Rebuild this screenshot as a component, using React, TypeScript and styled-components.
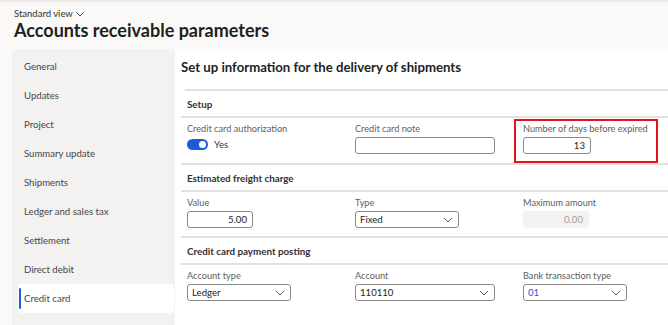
import React from 'react';
import styled, { createGlobalStyle } from 'styled-components';

const GlobalStyle = createGlobalStyle`
  html, body { margin: 0; padding: 0; background: #faf9f8; }
  body { font-family: Lato, "Open Sans", sans-serif; color: #201f1e; }
  * { box-sizing: border-box; }
`;

const Page = styled.div`
  width: 668px;
  height: 325px;
  overflow: hidden;
  display: flex;
  flex-direction: column;
  background: linear-gradient(#e6e4e2 0, #f3f2f1 2px, #faf9f8 4px);
`;

const Header = styled.header`
  height: 49px;
  padding: 8px 14px 0;
  display: flex;
  flex-direction: column;
`;

const ViewSwitcher = styled.div`
  display: flex;
  align-items: center;
  gap: 3px;
  font-size: 9.5px;
  line-height: 12px;
  color: #323130;
`;

const Title = styled.h1`
  margin: 0;
  font-size: 18px;
  font-weight: 700;
  line-height: 20px;
  color: #201f1e;
`;

const Panel = styled.div`
  flex: 1;
  margin-left: 12px;
  display: grid;
  grid-template-columns: 163px 1fr;
`;

const Nav = styled.nav`
  background: #f3f2f1;
  border-top-left-radius: 6px;
  padding: 3px 1px 0 6px;
  display: flex;
  flex-direction: column;
`;

const NavItem = styled.div<{ $active?: boolean }>`
  position: relative;
  height: 29px;
  display: flex;
  align-items: center;
  padding-left: 6px;
  font-size: 9.6px;
  color: #484644;
  border-radius: 4px;
  background: ${p => (p.$active ? '#ffffff' : 'transparent')};
  ${p =>
    p.$active &&
    `&::before {
      content: '';
      position: absolute;
      left: 1px;
      top: 4px;
      bottom: 4px;
      width: 2px;
      border-radius: 1px;
      background: #1d5bd8;
    }`}
`;

const Content = styled.main`
  background: #ffffff;
  padding-left: 6px;
  display: flex;
  flex-direction: column;
`;

const PageHeading = styled.h2`
  margin: 0;
  height: 40px;
  padding-top: 8px;
  font-size: 13.2px;
  line-height: 20px;
  font-weight: 700;
  color: #201f1e;
`;

const Divider = styled.div<{ $inset?: number }>`
  height: 2px;
  margin-left: ${p => p.$inset ?? 0}px;
  background: #e3e1df;
`;

const SectionTitle = styled.h3`
  margin: 0;
  height: 25px;
  padding-left: 6px;
  display: flex;
  align-items: center;
  font-size: 9.8px;
  font-weight: 700;
  color: #323130;
`;

const FieldRow = styled.div<{ $h: number }>`
  height: ${p => p.$h}px;
  padding: 4px 0 0 6px;
  display: grid;
  grid-template-columns: repeat(3, 168px);
`;

const Field = styled.div<{ $highlight?: boolean }>`
  position: relative;
  display: flex;
  flex-direction: column;
  ${p =>
    p.$highlight &&
    `&::after {
      content: '';
      position: absolute;
      left: -9px;
      top: -3px;
      width: 140px;
      height: 40px;
      border: 2px solid #e3121d;
    }`}
`;

const Label = styled.div`
  font-size: 9.2px;
  line-height: 14px;
  color: #605e5c;
  white-space: nowrap;
`;

const Control = styled.div<{ $w: number; $align?: 'left' | 'right'; $disabled?: boolean; $link?: boolean }>`
  width: ${p => p.$w}px;
  height: 17px;
  margin-top: 1px;
  display: flex;
  align-items: center;
  justify-content: ${p => (p.$align === 'right' ? 'flex-end' : 'space-between')};
  padding: 0 5px 0 4px;
  border: ${p => (p.$disabled ? '1px solid #f3f2f1' : '1px solid #8a8886')};
  border-radius: 3px;
  background: ${p => (p.$disabled ? '#f3f2f1' : '#ffffff')};
  font-size: 9.6px;
  color: ${p => (p.$disabled ? '#a19f9d' : p.$link ? '#1d5bd8' : '#201f1e')};
`;

const ToggleRow = styled.div`
  display: flex;
  align-items: center;
  gap: 6px;
  margin-top: 3px;
  font-size: 9.6px;
  color: #323130;
`;

const Toggle = styled.span`
  width: 21px;
  height: 11px;
  border-radius: 6px;
  background: #1d5bd8;
  display: flex;
  align-items: center;
  justify-content: flex-end;
  padding-right: 2px;
  &::after {
    content: '';
    width: 7px;
    height: 7px;
    border-radius: 50%;
    background: #ffffff;
  }
`;

const Chevron = () => (
  <svg width={10} height={6} viewBox="0 0 10 6" fill="none">
    <path d="M1 1 L5 5 L9 1" stroke="#605e5c" strokeWidth="1" />
  </svg>
);

const navItems = [
  'General',
  'Updates',
  'Project',
  'Summary update',
  'Shipments',
  'Ledger and sales tax',
  'Settlement',
  'Direct debit',
  'Credit card',
];

export default function App() {
  return (
    <Page>
      <GlobalStyle />
      <Header>
        <ViewSwitcher>
          Standard view
          <svg width={8} height={5} viewBox="0 0 8 5" fill="none">
            <path d="M0.5 0.5 L4 4 L7.5 0.5" stroke="#323130" strokeWidth="0.9" />
          </svg>
        </ViewSwitcher>
        <Title>Accounts receivable parameters</Title>
      </Header>
      <Panel>
        <Nav>
          {navItems.map(n => (
            <NavItem key={n} $active={n === 'Credit card'}>
              {n}
            </NavItem>
          ))}
        </Nav>
        <Content>
          <PageHeading>Set up information for the delivery of shipments</PageHeading>
          <Divider $inset={4} />
          <SectionTitle>Setup</SectionTitle>
          <Divider />
          <FieldRow $h={45}>
            <Field>
              <Label>Credit card authorization</Label>
              <ToggleRow>
                <Toggle />
                Yes
              </ToggleRow>
            </Field>
            <Field>
              <Label>Credit card note</Label>
              <Control $w={140} />
            </Field>
            <Field $highlight>
              <Label>Number of days before expired</Label>
              <Control $w={68} $align="right">13</Control>
            </Field>
          </FieldRow>
          <Divider />
          <SectionTitle>Estimated freight charge</SectionTitle>
          <Divider />
          <FieldRow $h={44}>
            <Field>
              <Label>Value</Label>
              <Control $w={66} $align="right">5.00</Control>
            </Field>
            <Field>
              <Label>Type</Label>
              <Control $w={104}>
                Fixed
                <Chevron />
              </Control>
            </Field>
            <Field>
              <Label>Maximum amount</Label>
              <Control $w={66} $align="right" $disabled>0.00</Control>
            </Field>
          </FieldRow>
          <Divider />
          <SectionTitle>Credit card payment posting</SectionTitle>
          <Divider />
          <FieldRow $h={44}>
            <Field>
              <Label>Account type</Label>
              <Control $w={104}>
                Ledger
                <Chevron />
              </Control>
            </Field>
            <Field>
              <Label>Account</Label>
              <Control $w={140}>
                110110
                <Chevron />
              </Control>
            </Field>
            <Field>
              <Label>Bank transaction type</Label>
              <Control $w={104} $link>
                01
                <Chevron />
              </Control>
            </Field>
          </FieldRow>
        </Content>
      </Panel>
    </Page>
  );
}
